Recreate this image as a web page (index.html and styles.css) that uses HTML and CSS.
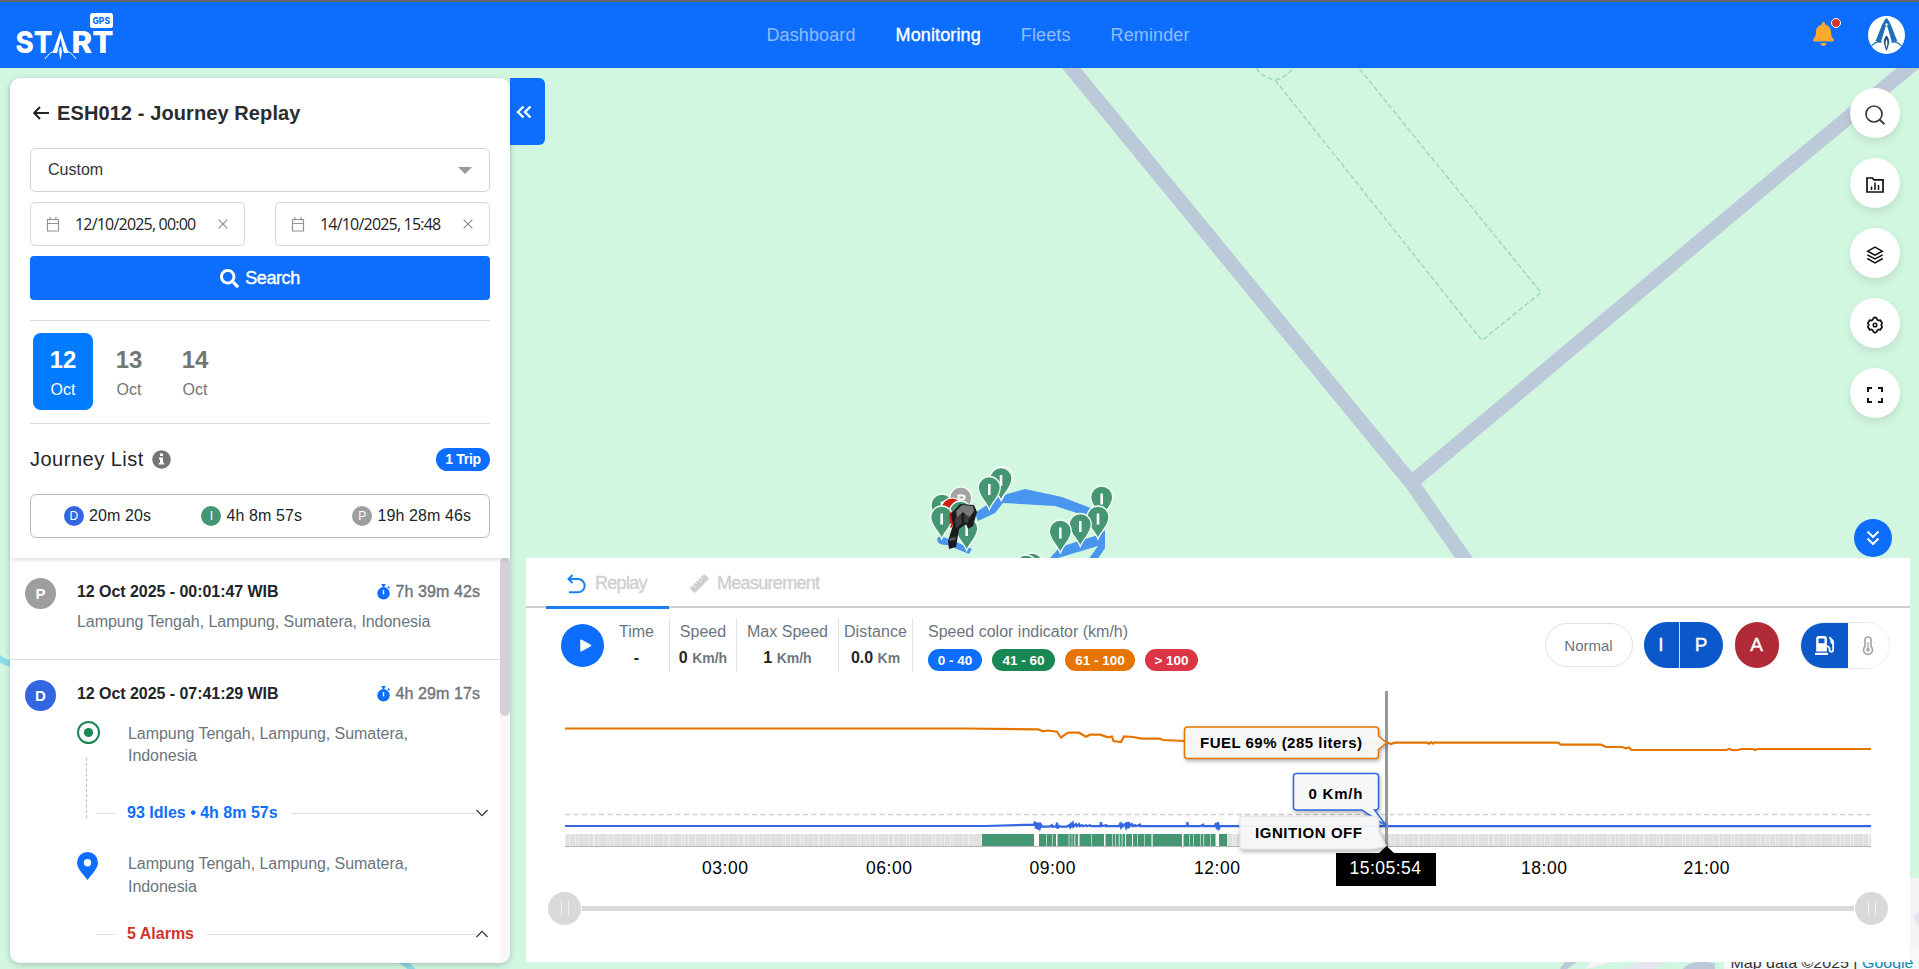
FILE: index.html
```html
<!DOCTYPE html>
<html lang="en">
<head>
<meta charset="utf-8">
<title>Journey Replay</title>
<link rel="stylesheet" href="styles.css">
</head>
<body>
<header class="topbar">
  <svg class="logo" width="104" height="58" viewBox="12 8 104 58">
    <rect x="90" y="11" width="23" height="15" rx="2.5" fill="#fff"/>
    <text class="logo-gps" x="92.500" y="22.300" textLength="17.500" lengthAdjust="spacingAndGlyphs">GPS</text>
    <g class="logo-word">
      <text x="15.500" y="51" textLength="37" lengthAdjust="spacingAndGlyphs">ST</text>
      <text x="71.500" y="51" textLength="42" lengthAdjust="spacingAndGlyphs">RT</text>
    </g>
    <path d="M60.500 28.500 L52.500 51 L57 51 L60.500 36 L64 51 L68.500 51 Z" fill="#fff"/>
    <path d="M60.500 44c-2.500 3-2 7 0 15c2-8 2.500-12 0-15z" fill="#fff" stroke="#0d6efd" stroke-width=".8"/>
    <path d="M45 57q5-8 13-9M76 57q-5-8-13-9" fill="none" stroke="#fff" stroke-width="1"/>
  </svg>
  <nav class="nav">
    <a>Dashboard</a><a class="on">Monitoring</a><a>Fleets</a><a>Reminder</a>
  </nav>
  <div class="account">
    <div class="bell">
      <svg width="21" height="24" viewBox="0 0 448 512"><path fill="#ffa931" d="M224 512c35.320 0 63.970-28.650 63.970-64H160.030c0 35.350 28.650 64 63.970 64zm215.390-149.710c-19.320-20.760-55.470-51.990-55.470-154.290 0-77.700-54.480-139.900-127.940-155.160V32c0-17.670-14.320-32-31.980-32s-31.980 14.330-31.980 32v20.840C118.560 68.100 64.080 130.300 64.080 208c0 102.300-36.150 133.530-55.470 154.290-6 6.450-8.660 14.160-8.610 21.710.11 16.400 12.980 32 32.100 32h383.800c19.120 0 32-15.600 32.100-32 .05-7.550-2.610-15.270-8.610-21.710z"/></svg>
      <i class="dot"></i>
    </div>
    <svg width="37" height="38" viewBox="0 0 37 38">
      <ellipse cx="18.500" cy="19" rx="18.500" ry="19" fill="#fff"/>
      <path d="M18.500 2C14 6 11 18 7.500 25l5 1.500C15 22 16 14 18.500 8.500C21 14 22 22 24.500 26.500l5-1.500C26 18 23 6 18.500 2z" fill="#1d6fb8"/>
      <circle cx="18.500" cy="8.500" r="1.600" fill="#fff" stroke="#1d6fb8" stroke-width=".6"/>
      <path d="M18.500 19c-4 4-4 8 0 17c4-9 4-13 0-17z" fill="#174b7d" stroke="#fff" stroke-width=".8"/>
      <path d="M18.500 23c-1.500 3-1 6 0 9c1-3 1.500-6 0-9z" fill="#fff"/>
      <path d="M3.500 30q4-5 10.500-4M33.500 30q-4-5-10.500-4" fill="none" stroke="#1d6fb8" stroke-width="1.100"/>
    </svg>
  </div>
</header>

<main class="stage">
  <svg class="map" width="1919" height="901" viewBox="0 68 1919 901">
    <rect y="68" width="1919" height="901" fill="#d2f7e1"/>
    <g fill="none" stroke="#bcc9d8" stroke-width="14.500">
      <path d="M1059 53 L1413 485 L1473 571"/>
      <path d="M1412 482 L1780 174 L1919 59"/>
    </g>
    <path d="M-4 655Q4 664 16 664M396 958Q408 964 414 972" fill="none" stroke="#8fdcea" stroke-width="6"/>
    <path d="M1275 80 L1482 340.500 L1541 292.500 L1358 67 M1256.500 68Q1261 77 1275 80Q1287 77 1293 68" fill="none" stroke="#9bdbc2" stroke-width="1.600" stroke-dasharray="5 2.600"/>
    <path d="M1586 969Q1588 964 1592 958H1919V878H1908Z" fill="#f3f5f7"/>
    <path d="M1562 972Q1568 958 1584 958M1684 972Q1692 962 1712 966V972z" fill="#bcc9d8" stroke="#bcc9d8" stroke-width="6"/>
    <path d="M1624 969l15-8h28l-12 8zM1913 917l6-6v16z" fill="#e3e6ed"/>
    <rect x="1724" y="950" width="195" height="19" fill="#f7f8f8"/>
    <text class="credit" x="1730.500" y="967.500" textLength="183" lengthAdjust="spacingAndGlyphs">Map data ©2025 | <tspan fill="#1a8ab5">Google</tspan></text>

    <g fill="#4a96ef">
      <path d="M1000 496L1025 489L1062 497L1101 512L1088 516L1077 513L1055 506L1003 503L995 513L978 521L975 513z"/>
      <path d="M937 539q2-4 6-2l9 3l20 9l-3 5l-22-9q-10 0-10-6z"/>
      <path d="M1098 535L1105 530V548L1097 560H1088L1098 546L1058 558H1050L1060 547z"/>
    </g>
    <defs>
      <g id="pin"><path d="M0 0C-3-8-11-13-11-22A11 11 0 0 1 11-22C11-13 3-8 0 0z" fill="#459672" stroke="#f4fbf6" stroke-width="1.300"/><path d="M0-25.500V-14.500" stroke="#fff" stroke-width="2.600"/></g>
    </defs>
    <use href="#pin" x="1002" y="499.500"/><use href="#pin" x="1001" y="500.500"/><use href="#pin" x="989.300" y="509.500"/>
    <use href="#pin" x="1101.700" y="519"/><use href="#pin" x="1098" y="539"/><use href="#pin" x="1080.300" y="546.500"/><use href="#pin" x="1060.300" y="553"/>
    <use href="#pin" x="1032" y="586"/><use href="#pin" x="1026" y="588"/>
    <use href="#pin" x="942" y="527"/>
    <path d="M960.700 520c-3-8-11-13-11-22a11 11 0 0 1 22 0c0 9-8 14-11 22z" fill="#a3a3a3" stroke="#fff" stroke-width="1.200"/>
    <path d="M958.500 502v-6.500h4a2 2 0 0 1 0 4h-4" fill="none" stroke="#fff" stroke-width="2"/>
    <path d="M951 530c-3-8-10-13-10-21a11 11 0 0 1 22 0c0 8-9 13-12 21z" fill="#d01d10" stroke="#fff" stroke-width="1.200"/>
    <use href="#pin" x="960.500" y="534"/><use href="#pin" x="966.700" y="550.500"/><use href="#pin" x="941.700" y="539"/>
    <path d="M949 514l4-3v14l-3-2z" fill="#d01d10"/>
    <g>
      <path d="M951 514L960 504L974 505L977 512L973 526L968 529L966 524L959 529L956 547L949 549L948 541L953 525z" fill="#1c1c1e"/>
      <path d="M956 511L962 505L973 506L974 511L969 518L963 512L957 519z" fill="#77787a"/>
      <path d="M955 519l6-5l1 9l-6 5zM964 515l5 1l-1 7l-4-1z" fill="#3d3e40"/>
      <path d="M950 538l6-1l-1 3l-6 1z" fill="#55575a"/>
    </g>
  </svg>

  <aside class="side">
    <button class="collapse"><svg width="16" height="14" viewBox="0 0 16 14"><path d="M7.500 1.500L2 7l5.500 5.500M14.500 1.500L9 7l5.500 5.500" fill="none" stroke="#fff" stroke-width="2.300"/></svg></button>
    <div class="filters">
      <h1 class="title"><svg width="16" height="14" viewBox="0 0 16 14"><path d="M16 7H1.500M7 1L1.200 7L7 13" fill="none" stroke="#212529" stroke-width="2"/></svg><span>ESH012 - Journey Replay</span></h1>
      <div class="select"><span>Custom</span><i class="caret"></i></div>
      <div class="dates">
        <div class="date"><svg width="14" height="15" viewBox="0 0 14 15"><path d="M1.500 2.500h11v11.500h-11zM1.500 6.500h11M4 0v3.500M10 0v3.500" fill="none" stroke="#949494" stroke-width="1.200"/></svg><span>12/10/2025, 00:00</span><svg width="10" height="10" viewBox="0 0 10 10"><path d="M.7.7l8.600 8.600M9.300.7L.7 9.300" stroke="#8b8b8b" stroke-width="1.200"/></svg></div>
        <div class="date"><svg width="14" height="15" viewBox="0 0 14 15"><path d="M1.500 2.500h11v11.500h-11zM1.500 6.500h11M4 0v3.500M10 0v3.500" fill="none" stroke="#949494" stroke-width="1.200"/></svg><span>14/10/2025, 15:48</span><svg width="10" height="10" viewBox="0 0 10 10"><path d="M.7.7l8.600 8.600M9.300.7L.7 9.300" stroke="#8b8b8b" stroke-width="1.200"/></svg></div>
      </div>
      <button class="search"><svg width="19" height="19" viewBox="0 0 512 512"><path fill="#fff" d="M505 442.700L405.300 343c-4.500-4.500-10.600-7-17-7H372c27.600-35.300 44-79.700 44-128C416 93.100 322.900 0 208 0S0 93.100 0 208s93.100 208 208 208c48.300 0 92.700-16.400 128-44v16.300c0 6.400 2.500 12.500 7 17l99.700 99.700c9.400 9.400 24.600 9.400 33.900 0l28.300-28.300c9.400-9.400 9.400-24.600.1-34zM208 336c-70.700 0-128-57.200-128-128 0-70.700 57.200-128 128-128 70.700 0 128 57.200 128 128 0 70.700-57.200 128-128 128z"/></svg><span>Search</span></button>
      <div class="days">
        <div class="day on"><b>12</b><span>Oct</span></div>
        <div class="day"><b>13</b><span>Oct</span></div>
        <div class="day"><b>14</b><span>Oct</span></div>
      </div>
      <div class="listhead">
        <h2>Journey List</h2>
        <svg width="19" height="19" viewBox="0 0 19 19"><circle cx="9.500" cy="9.500" r="9.300" fill="#757575"/><path d="M8 3.600h3v2.500H8zM7 7.500h4v5.200h1.200v1.900H6.800v-1.900H8V9.400H7z" fill="#fff"/></svg>
        <span class="trips">1 Trip</span>
      </div>
      <div class="totals">
        <div><i class="mk drive">D</i>20m 20s</div>
        <div><i class="mk idle">I</i>4h 8m 57s</div>
        <div><i class="mk park">P</i>19h 28m 46s</div>
      </div>
    </div>
    <div class="scroller">
      <div class="list">
        <article class="trip">
          <i class="mk big park">P</i>
          <div class="body">
            <div class="row"><b>12 Oct 2025 - 00:01:47 WIB</b><svg width="13" height="16" viewBox="0 0 13 16"><path d="M4.500 0h4v1.500h-1v1.600h-2V1.500h-1z" fill="#0d6efd"/><circle cx="6.500" cy="9.300" r="6.200" fill="#0d6efd"/><path d="M11 2.600l1.500 1.500" stroke="#0d6efd" stroke-width="1.500"/><path d="M6.500 6v4.500" stroke="#fff" stroke-width="1.400"/></svg><em>7h 39m 42s</em></div>
            <p>Lampung Tengah, Lampung, Sumatera, Indonesia</p>
          </div>
        </article>
        <article class="trip">
          <i class="mk big drive">D</i>
          <div class="body">
            <div class="row"><b>12 Oct 2025 - 07:41:29 WIB</b><svg width="13" height="16" viewBox="0 0 13 16"><path d="M4.500 0h4v1.500h-1v1.600h-2V1.500h-1z" fill="#0d6efd"/><circle cx="6.500" cy="9.300" r="6.200" fill="#0d6efd"/><path d="M11 2.600l1.500 1.500" stroke="#0d6efd" stroke-width="1.500"/><path d="M6.500 6v4.500" stroke="#fff" stroke-width="1.400"/></svg><em>4h 29m 17s</em></div>
            <div class="leg from">
              <div class="rail"><svg width="23" height="23" viewBox="0 0 23 23"><circle cx="11.500" cy="11.500" r="10.500" fill="none" stroke="#198754" stroke-width="2"/><circle cx="11.500" cy="11.500" r="4.600" fill="#198754"/></svg><i class="dash"></i></div>
              <p>Lampung Tengah, Lampung, Sumatera, Indonesia</p>
            </div>
            <div class="fold idles"><i class="stub"></i><b>93 Idles • 4h 8m 57s</b><i class="line"></i><svg width="12" height="8" viewBox="0 0 12 8"><path d="M.5 1L6 6.700L11.500 1" fill="none" stroke="#333" stroke-width="1.200"/></svg></div>
            <div class="leg to">
              <div class="rail"><svg width="21" height="28" viewBox="0 0 21 28"><path fill="#0d6efd" fill-rule="evenodd" d="M10.500 0A10.500 10.500 0 0 0 0 10.500C0 16.500 6 22 10.500 28C15 22 21 16.500 21 10.500A10.500 10.500 0 0 0 10.500 0zm0 7a3.700 3.700 0 1 1 0 7.400a3.700 3.700 0 1 1 0-7.400z"/></svg></div>
              <p>Lampung Tengah, Lampung, Sumatera, Indonesia</p>
            </div>
            <div class="fold alarms"><i class="stub"></i><b>5 Alarms</b><i class="line"></i><svg width="12" height="8" viewBox="0 0 12 8"><path d="M.5 7L6 1.300L11.500 7" fill="none" stroke="#333" stroke-width="1.200"/></svg></div>
          </div>
        </article>
      </div>
      <div class="bar"><i></i></div>
    </div>
  </aside>

  <section class="work">
    <div class="tools">
      <button><svg width="20" height="20" viewBox="0 0 20 20"><circle cx="9" cy="9" r="8" fill="none" stroke="#3c3c3c" stroke-width="1.700"/><path d="M14.500 14.500l5 4.800" stroke="#3c3c3c" stroke-width="1.900"/></svg></button>
      <button><svg width="18" height="16" viewBox="0 0 18 16"><path d="M1 1h5.500l1.500 1.800h9V15H1z" fill="none" stroke="#111" stroke-width="1.700"/><path d="M5.500 9.500V13M9 5.500V13M12.500 8V13" stroke="#111" stroke-width="1.500"/></svg></button>
      <button><svg width="18" height="18" viewBox="0 0 18 18"><path d="M9 1.200l7.300 4L9 9.200l-7.300-4zM1.300 8.800L9 13l7.700-4.200M1.300 12.500L9 16.800l7.700-4.300" fill="none" stroke="#111" stroke-width="1.500"/></svg></button>
      <button><svg width="18" height="18" viewBox="0 0 18 18"><path d="M7.300 2.300L9 1.200l1.700 1.100l.5 1.500l1.500.8l1.700-.4l1.800 3l-1 1.800l1 1.800l-1.800 3l-1.700-.4l-1.500.8l-.5 1.500L9 16.800l-1.700-1.100l-.5-1.500l-1.500-.8l-1.700.4l-1.800-3l1-1.800l-1-1.800l1.800-3l1.700.4l1.500-.8z" fill="none" stroke="#111" stroke-width="1.700" stroke-linejoin="round"/><circle cx="9" cy="9" r="1.800" fill="none" stroke="#111" stroke-width="1.500"/></svg></button>
      <button><svg width="16" height="16" viewBox="0 0 16 16"><path d="M1 5V1h4M11 1h4v4M15 11v4h-4M5 15H1v-4" fill="none" stroke="#111" stroke-width="2"/></svg></button>
    </div>
    <button class="fold-btn"><svg width="14" height="16" viewBox="0 0 14 16"><path d="M1.500 1.500L7 7l5.500-5.500M1.500 8.500L7 14l5.500-5.500" fill="none" stroke="#fff" stroke-width="2"/></svg></button>

    <div class="panel">
      <div class="tabs">
        <div class="tab on"><svg width="19" height="20" viewBox="0 0 19 20"><path d="M5.500 1L1.500 5L5.500 9M1.500 5H11A6.500 6.500 0 0 1 11 18.300H2" fill="none" stroke="#1a7ff0" stroke-width="2"/></svg><span>Replay</span></div>
        <div class="tab"><svg width="19" height="19" viewBox="0 0 19 19"><path d="M13.500.5a1 1 0 0 1 1.400 0l3.600 3.600a1 1 0 0 1 0 1.400L5.500 18.500a1 1 0 0 1-1.400 0L.5 14.900a1 1 0 0 1 0-1.400z" fill="#cfcfcf"/><path d="M3 11l2.500 2.500M5.500 8.500l1.700 1.700M8 6l2.500 2.500M10.500 3.500l1.700 1.700" stroke="#fff" stroke-width="1"/></svg><span>Measurement</span></div>
      </div>
      <div class="stats">
        <button class="play"><svg width="12" height="13" viewBox="0 0 12 13"><path d="M1 1.200L10.500 6.500L1 11.800z" fill="#fff" stroke="#fff" stroke-width="1.500" stroke-linejoin="round"/></svg></button>
        <div class="stat w-time"><span>Time</span><b>-</b></div>
        <div class="stat w-speed"><span>Speed</span><b>0 <small>Km/h</small></b></div>
        <div class="stat w-max"><span>Max Speed</span><b>1 <small>Km/h</small></b></div>
        <div class="stat w-dist"><span>Distance</span><b>0.0 <small>Km</small></b></div>
        <div class="legend"><span>Speed color indicator (km/h)</span>
          <div><i class="c1">0 - 40</i><i class="c2">41 - 60</i><i class="c3">61 - 100</i><i class="c4">&gt; 100</i></div>
        </div>
        <div class="controls">
          <button class="normal">Normal</button>
          <div class="pair"><button>I</button><button>P</button></div>
          <button class="alarm">A</button>
          <div class="fuel"><button class="on"><svg width="19" height="19" viewBox="0 0 512 512"><path fill="#fff" d="M336 448H16c-8.800 0-16 7.200-16 16v32c0 8.800 7.200 16 16 16h320c8.800 0 16-7.200 16-16v-32c0-8.800-7.200-16-16-16zm157.200-340.700l-81-81c-6.200-6.200-16.400-6.200-22.600 0l-11.300 11.300c-6.200 6.200-6.200 16.400 0 22.600L416 97.900V160c0 28.100 20.900 51.300 48 55.200V376c0 13.200-10.800 24-24 24s-24-10.800-24-24v-32c0-48.600-39.400-88-88-88h-8V64c0-35.300-28.700-64-64-64H96C60.700 0 32 28.700 32 64v352h288V304h8c22.100 0 40 17.900 40 40v27.800c0 37.700 27 72 64.500 75.900 43 4.300 79.500-29.500 79.500-71.700V152.600c0-17-6.800-33.300-18.800-45.300zM256 192H96V64h160v128z"/></svg></button><button><svg width="12" height="19" viewBox="0 0 12 19"><path d="M3 4a3 3 0 0 1 6 0v6.500a4.500 4.500 0 1 1-6 0z" fill="none" stroke="#a3a5a8" stroke-width="1.700"/><path d="M6 6v8" stroke="#a3a5a8" stroke-width="1.300"/><circle cx="6" cy="13.800" r="1.900" fill="#a3a5a8"/></svg></button></div>
        </div>
      </div>
      <svg class="chart" width="1384" height="210" viewBox="526 680 1384 210">
        <path d="M565 814.500H1871" stroke="#cfcfcf" stroke-width="1.300" stroke-dasharray="5 3.500"/>
        <path d="M565 840.500H1871" stroke="#e0e0e0" stroke-width="13"/>
        <path d="M565 840.500H1871" stroke="#ededed" stroke-width="13" stroke-dasharray="1 3 1 5 1 2 1 9 1 4 2 3 1 7 1 2 1 3 1 6 1 11 1 2 1 4"/>
        <path d="M982 840.500H1227" stroke="#459672" stroke-width="13"/>
        <path d="M1034 840.500h5M1056 840.500h1.500M1078 840.500h1.500M1104 840.500h1.500M1125 840.500h1M1132 840.500h1M1151.500 840.500h1.200M1182 840.500h1.500M1215.500 840.500h3.500" stroke="#fff" stroke-width="13"/>
        <path d="M1046 840.500h1M1052 840.500h1M1068.500 840.500h1.200M1071.500 840.500h1M1074 840.500h1.500M1091 840.500h1M1112 840.500h1M1115 840.500h1M1118.500 840.500h1.500M1121.500 840.500h1.300M1137 840.500h1M1144 840.500h1M1189 840.500h1M1193 840.500h1M1200 840.500h1M1203 840.500h1.300M1210 840.500h1" stroke="#a9cfbd" stroke-width="13"/>
        <path d="M565 846.500H1871" stroke="#b5b5b5" stroke-width="1"/>
        <path d="M565 826H985L1034 824.700l1-3 1 7 1-6 1 7 1-7 1 5 1-3 1 2H1049l3-1.500v1.500H1056l1-4 .5 6 1-3 2 1H1067l2-1.500 1 2 1-3 1 2 1-3 1 3 2-2 1 2 2-2 1 2 2-1 1 1 3-1 1 1 3-1 1 1H1100l1-4 1 4 4-1v1H1119l1-2 1 3 1-3 1 2 2-2 1 3 1-5 1 6 1-6 1 4 2-2 1 2 2-1 1 1 4-1.500v1.500H1187l.5-4 .5 4H1200l3-1.500v1.500H1215l1-3 1 6 1-7 1 6 1-2H1871" fill="none" stroke="#3366e0" stroke-width="2.200"/>
        <path d="M565 728.500H965L1038 729.300L1043 731.300L1048 730.500L1057 731.700L1061 737.500L1068 732.700H1079L1086 736.700L1090 734.700H1100L1108 737.300L1112 736.500L1113.500 741L1121 742L1124 736.300L1133 737L1142 738.700H1160L1163 740L1185 741L1210 743H1389L1391 744L1395 742.700H1427l2 1 2-1.500 2 1.500 2-1.500 2 .5H1558.500L1560.500 744.700H1601L1606 747H1622L1626 748.300L1629 747.500L1631.500 750H1726.500L1729 749L1733 750.200L1738 750L1741 749H1753L1755 750L1758 749H1871" fill="none" stroke="#e67400" stroke-width="2.200"/>
        <path d="M1386.500 691V853" stroke="#999" stroke-width="3"/>
        <g class="tips">
          <path d="M1187.500 727H1375.500q3 0 3 3V736L1386.500 742.700L1378.500 749.500V755.500q0 3-3 3H1187.500q-3 0-3-3V730q0-3 3-3z" stroke="#e67400"/>
          <path d="M1296.500 773.500H1375.500q3 0 3 3V807q0 3-3 3H1374.500L1386.500 826L1362 810H1296.500q-3 0-3-3V776.500q0-3 3-3z" stroke="#3366e0"/>
          <path class="plain" d="M1243 816.500H1375.500q3 0 3 3V831L1386 846.500L1372 849H1243q-3 0-3-3V819.500q0-3 3-3z"/>
        </g>
        <path d="M1336 853H1379L1386.500 846L1394 853H1436V886H1336z" fill="#000"/>
        <g class="tiptext">
          <text x="1200" y="748.200" textLength="162">FUEL 69% (285 liters)</text>
          <text x="1308.500" y="799.200" textLength="54">0 Km/h</text>
          <text x="1255" y="838.200" textLength="107">IGNITION OFF</text>
        </g>
        <g class="axis">
          <text x="702" y="874" textLength="46">03:00</text><text x="866" y="874" textLength="46">06:00</text><text x="1029.500" y="874" textLength="46">09:00</text><text x="1194" y="874" textLength="46">12:00</text><text x="1521" y="874" textLength="46">18:00</text><text x="1683.500" y="874" textLength="46">21:00</text>
          <text x="1349.500" y="874" textLength="71.500" fill="#fff">15:05:54</text>
        </g>
      </svg>
      <div class="slider"><i class="knob"></i><i class="track"></i><i class="knob"></i></div>
    </div>
  </section>
</main>
</body>
</html>
```
FILE: styles.css
```css
* { box-sizing: border-box; }
body {
  margin: 0; width: 1919px; height: 969px; overflow: hidden;
  display: flex; flex-direction: column;
  font-family: "Liberation Sans", Arial, sans-serif; font-size: 16px; color: #212529;
}
button { border: 0; padding: 0; font: inherit; display: flex; align-items: center; justify-content: center; }
i, em { font-style: normal; }
h1, h2, p { margin: 0; font-weight: 400; }
svg { display: block; flex: none; }

.topbar {
  height: 68px; flex: none; background: #0d6efd; border-top: 2px solid #666;
  display: flex; align-items: center; justify-content: space-between; padding: 0 14px 0 12px; position: relative;
}
.logo { margin-top: 8px; }
.logo-gps { font: 800 9px Inter, sans-serif; fill: #0d6efd; }
.logo-word { font: 800 30.500px Inter, sans-serif; fill: #fff; }
.nav { display: flex; gap: 40px; font-size: 18px; line-height: 22px; color: rgba(255,255,255,.55); margin: 0 0 1px 27px; letter-spacing: .12px; }
.nav .on { color: #fff; -webkit-text-stroke: .35px #fff; }
.account { display: flex; align-items: center; gap: 34px; }
.bell { position: relative; }
.bell svg { margin-top: -3px; }
.dot { position: absolute; left: 18px; top: -7px; width: 10px; height: 10px; border-radius: 50%; background: #d8332b; border: 1px solid #fff; }

.stage { position: relative; flex: 1; display: flex; padding: 10px 9px 6px 10px; gap: 16px; }
.map { position: absolute; left: 0; top: 0; }
.credit { font: 15px "Liberation Sans", Arial, sans-serif; fill: #333; }

.side { position: relative; width: 500px; height: 885px; background: #fff; border-radius: 10px; box-shadow: 0 2px 6px rgba(0,0,0,.2); display: flex; flex-direction: column; flex: none; }
.collapse { position: absolute; left: 500px; top: 0; width: 35px; height: 67px; background: #0d6efd; border-radius: 0 6px 6px 0; padding: 0 8px 0 0; }
.filters { height: 480px; flex: none; padding: 20px 20px 0; position: relative; box-shadow: 0 2px 4px rgba(0,0,0,.12); border-radius: 10px 10px 0 0; }
.title { display: flex; align-items: center; gap: 8px; height: 30px; margin: 0 0 20px 3px; font-size: 20px; font-weight: 700; letter-spacing: .1px; color: #2a2c2f; }
.select { height: 44px; border: 1px solid #ced2da; border-radius: 6px; display: flex; align-items: center; justify-content: space-between; padding: 0 17px 0 17px; color: #333; }
.caret { border: 7px solid transparent; border-top-color: #999; border-bottom: 0; margin-top: 1px; }
.dates { display: grid; grid-template-columns: 215px 215px; justify-content: space-between; margin: 10px 0; }
.date { height: 44px; border: 1px solid #d9d9d9; border-radius: 5px; display: flex; align-items: center; padding: 0 16px 0 15px; }
.date span { flex: 1; margin-left: 15px; font-family: "Open Sans", "Noto Sans", sans-serif; font-size: 16px; letter-spacing: -.8px; color: #222; white-space: nowrap; }
.search { width: 100%; height: 44px; background: #0d6efd; color: #fff; border-radius: 4px; font-size: 18px; letter-spacing: -.4px; gap: 6px; -webkit-text-stroke: .4px #fff; }
.days { display: flex; gap: 6px; height: 104px; margin-top: 20px; padding: 12px 3px; border: solid #dcdcdc; border-width: 1px 0; }
.day { width: 60px; height: 77px; border-radius: 8px; text-align: center; padding-top: 12px; color: #757575; }
.day b { display: block; font-size: 24px; line-height: 30px; }
.day span { display: block; margin-top: 5px; line-height: 20px; }
.day.on { background: #007bff; color: #fff; }
.listhead { display: flex; align-items: center; height: 29px; margin-top: 21px; }
.listhead h2 { font-size: 20px; letter-spacing: .5px; margin-right: 8px; }
.trips { margin-left: auto; width: 54px; height: 23px; border-radius: 12px; background: #0d6efd; color: #fff; font-size: 14px; font-weight: 700; line-height: 23px; text-align: center; letter-spacing: -.3px; }
.totals { height: 44px; margin-top: 20px; border: 1px solid #bbb; border-radius: 6px; display: flex; align-items: center; justify-content: space-between; padding: 0 18px 0 33px; letter-spacing: .1px; }
.totals div { display: flex; align-items: center; }
.mk { display: flex; align-items: center; justify-content: center; border-radius: 50%; width: 20px; height: 20px; margin-right: 5px; color: #fff; font-size: 12px; }
.drive { background: #3366e0; }
.idle { background: #459672; }
.park { background: #9e9e9e; }
.mk.big { width: 31px; height: 31px; font-size: 15px; margin: -2px 21px 0 0; flex: none; font-weight: 700; }

.scroller { flex: 1; display: flex; }
.list { flex: 1; min-width: 0; }
.trip { display: flex; padding: 22px 12px 25px 15px; border-bottom: 1px solid #dcdcdc; }
.trip:last-child { border: 0; padding-bottom: 0; }
.body { flex: 1; color: #6c757d; }
.row { display: flex; align-items: center; height: 24px; padding-right: 8px; }
.row b { color: #212529; flex: 1; letter-spacing: -.05px; }
.row em { margin-left: 5px; -webkit-text-stroke: .4px #6c757d; letter-spacing: .1px; }
.body > p { margin-top: 6px; line-height: 24px; white-space: nowrap; letter-spacing: -.05px; }
.leg { display: flex; }
.leg p { width: 310px; letter-spacing: -.05px; }
.from { margin-top: 15px; height: 80px; }
.from p { line-height: 22px; padding-top: 2px; }
.to { margin-top: 27px; height: 70px; }
.to p { line-height: 23px; }
.rail { width: 51px; flex: none; }
.dash { display: block; width: 0; height: 60px; margin: 14px 0 0 9px; border-left: 1px dashed #bbb; }
.fold { display: flex; align-items: center; height: 24px; padding-left: 19px; }
.stub { width: 19px; height: 1px; background: #dcdfe4; margin-right: 12px; }
.line { flex: 1; height: 1px; background: #dcdfe4; margin-left: 13px; }
.idles b { color: #0d6efd; }
.alarms b { color: #d0342c; }
.bar { width: 10px; background: #f8f8f8; border-radius: 0 0 10px 0; }
.bar i { display: block; height: 158px; border-radius: 5px; background: #d2d1d8; }

.work { position: relative; flex: 1; display: flex; flex-direction: column; align-items: flex-end; }
.tools { display: flex; flex-direction: column; gap: 20px; padding: 10px 10px 0 0; }
.tools button { width: 50px; height: 50px; border-radius: 50%; background: #fff; box-shadow: 0 4px 10px rgba(0,0,0,.1); padding-top: 4px; }
.fold-btn { width: 38px; height: 38px; border-radius: 50%; background: #0d6efd; margin: 101px 18.500px 1px 0; }
.panel { width: 1384px; height: 404px; flex: none; background: #fff; }
.tabs { height: 50px; display: flex; border-bottom: 2px solid #d0d0d0; padding-left: 20px; font-size: 18px; color: #cfcfcf; -webkit-text-stroke: .4px #cfcfcf; letter-spacing: -.7px; }
.tab { display: flex; align-items: center; height: 51px; padding-left: 21px; gap: 8px; }
.tab.on { width: 123px; border-bottom: 3px solid #1a7ff0; gap: 9px; padding-top: 3px; }
.stats { height: 54px; margin-top: 10px; display: flex; align-items: center; padding: 0 20.500px 0 35px; }
.play { width: 43px; height: 43px; border-radius: 50%; background: #0d6efd; padding-left: 6px; }
.stat { height: 54px; border-right: 1px solid #dee2e6; padding-top: 1px; text-align: center; line-height: 26px; white-space: nowrap; }
.stat span, .legend span { display: block; color: #6c757d; }
.stat b { display: block; font-weight: 700; }
.stat small { font-size: 14px; color: #6c757d; }
.w-time { width: 66px; }
.w-speed { width: 67px; }
.w-max { width: 102px; }
.w-dist { width: 74px; }
.w-dist span { letter-spacing: .1px; }
.legend { margin-left: 15px; height: 54px; padding-top: 1px; line-height: 26px; }
.legend div { display: flex; gap: 10px; padding-top: 4px; }
.legend i { height: 22px; line-height: 23px; border-radius: 11px; color: #fff; font-size: 13.500px; font-weight: 700; text-align: center; }
.c1 { width: 54px; background: #0d6efd; }
.c2 { width: 63px; background: #198754; }
.c3 { width: 70px; background: #e67400; }
.c4 { width: 53px; background: #dc3545; }
.controls { margin-left: auto; display: flex; align-items: center; }
.normal { width: 88px; height: 44px; border: 1px solid #dee2e6; border-radius: 22px; background: #fff; color: #6c757d; font-size: 15px; }
.pair { display: flex; margin-left: 11px; border-radius: 23px; overflow: hidden; gap: 1px; background: #cfe0fa; }
.pair button { width: 35px; height: 46px; background: #0a58ca; color: #fff; font-size: 19px; -webkit-text-stroke: .4px #fff; }
.pair button + button { width: 43px; }
.alarm { width: 44px; height: 46px; border-radius: 23px; margin-left: 12px; background: #b02a37; color: #fff; font-size: 19px; -webkit-text-stroke: .4px #fff; }
.fuel { display: flex; width: 90px; height: 47px; margin-left: 21px; border: 1px solid #e9ecef; border-radius: 24px; overflow: hidden; }
.fuel button { flex: 1; background: #fff; }
.fuel .on { flex: none; width: 47px; background: #0a58ca; }
.chart { margin-top: 8px; }
.tips { fill: #fafafa; stroke-width: 1.500; filter: drop-shadow(1px 2px 2px rgba(0,0,0,.3)); }
.tips path { fill-opacity: .95; }
.tips .plain { stroke: #e6e6e6; }
.tiptext { font: 700 15px "Liberation Sans", Arial, sans-serif; fill: #000; }
.axis { font: 17.500px "Liberation Sans", Arial, sans-serif; }
.slider { display: flex; align-items: center; height: 34px; padding: 0 22px; margin-top: 1px; }
.knob { width: 33px; height: 33px; border-radius: 50%; background: #d9d9d9; display: flex; align-items: center; justify-content: center; }
.knob::before { content: ""; width: 6px; height: 15px; border: solid #f0f0f0; border-width: 0 1.500px; }
.track { flex: 1; height: 5px; background: #d9d9d9; margin: 0 1px; }
```
